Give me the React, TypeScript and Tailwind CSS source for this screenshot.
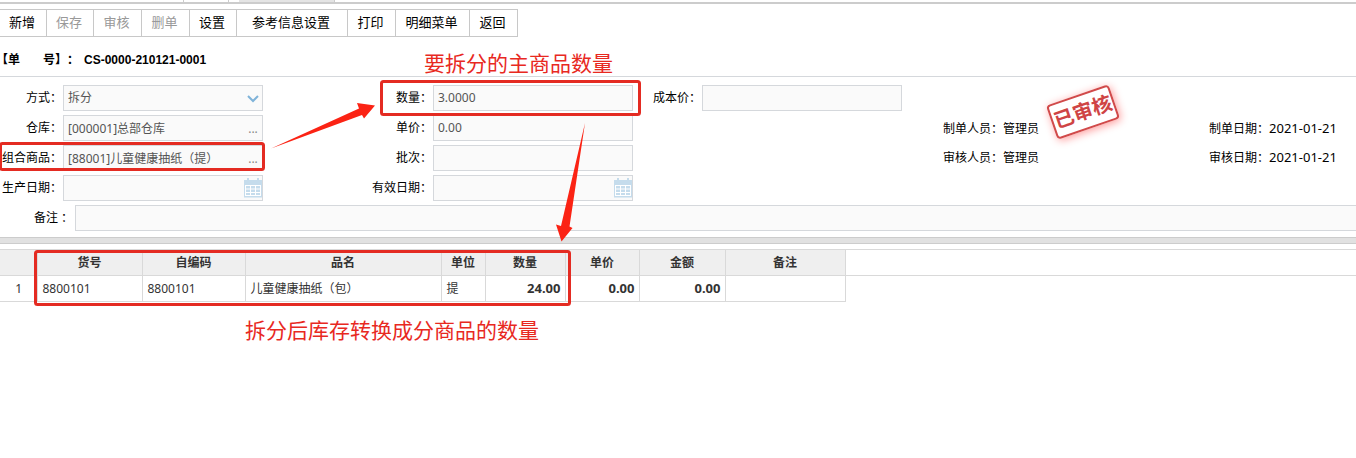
import type { ReactNode } from "react";

const toolbar = [
  { label: "新增", width: "w-[47px]" },
  { label: "保存", width: "w-[47px]", disabled: true },
  { label: "审核", width: "w-12", disabled: true },
  { label: "删单", width: "w-12", disabled: true },
  { label: "设置", width: "w-[47px]" },
  { label: "参考信息设置", width: "w-[111px]" },
  { label: "打印", width: "w-12" },
  { label: "明细菜单", width: "w-[74px]" },
  { label: "返回", width: "w-12" },
];

const columns = [
  { title: "", width: "w-[37px]" },
  { title: "货号", width: "w-[105px]" },
  { title: "自编码", width: "w-[103px]" },
  { title: "品名", width: "w-[196px]" },
  { title: "单位", width: "w-[44px]" },
  { title: "数量", width: "w-[80px]" },
  { title: "单价", width: "w-[74px]" },
  { title: "金额", width: "w-[86px]" },
  { title: "备注", width: "w-[120px]" },
];

const rows = [
  { code: "8800101", custom: "8800101", name: "儿童健康抽纸（包）", unit: "提", qty: "24.00", price: "0.00", amount: "0.00" },
];

const fieldClass =
  "block h-[26px] w-full rounded-none border border-[#d5d8dc] bg-[#fafafa] px-1 pb-px text-xs text-[#555] outline-none";

function CalendarIcon() {
  return (
    <svg className="h-5 w-5" viewBox="0 0 20 20" fill="none">
      <path d="M1 2h18v17.5H1z" fill="#c5dcec" />
      <path d="M4 0h2v3H4zM14 0h2v3h-2z" fill="#c5dcec" />
      <path d="M2 7h16v11H2z" fill="#fff" />
      <path d="M3 8h4v2.5H3zM8 8h4v2.5H8zM13 8h4v2.5h-4zM3 11.5h4V14H3zM8 11.5h4V14H8zM13 11.5h4V14h-4zM3 15h4v2H3zM8 15h4v2H8zM13 15h4v2h-4z" fill="#c5dcec" />
    </svg>
  );
}

function Field({ id, label, value = "", children }: { id: string; label: string; value?: string; children?: ReactNode }) {
  return (
    <>
      <label htmlFor={id} className="whitespace-nowrap pr-px text-right">
        {label}：
      </label>
      <div className="relative">
        <input id={id} type="text" readOnly value={value} className={fieldClass} />
        {children}
      </div>
    </>
  );
}

function PickButton({ label }: { label: string }) {
  return (
    <button type="button" aria-label={label} className="absolute right-1 top-1 h-5 w-3 text-xs text-[#888]">
      ...
    </button>
  );
}

function DateButton({ label }: { label: string }) {
  return (
    <button type="button" aria-label={label} className="absolute right-0 top-[3px]">
      <CalendarIcon />
    </button>
  );
}

function Meta({ label, value, className = "" }: { label: string; value: string; className?: string }) {
  return (
    <div className="flex h-[18px] items-center whitespace-nowrap">
      <dt>{label}：</dt>
      <dd className={className}>{value}</dd>
    </div>
  );
}

function Annotations() {
  return (
    <div className="pointer-events-none absolute inset-0 overflow-hidden text-[21px] leading-7 text-[#e8291f]">
      <svg className="absolute left-0 top-0 h-[320px] w-[680px]" viewBox="0 0 680 320" fill="none">
        <g stroke="#e42b22" strokeWidth="3">
          <rect x="0.5" y="143.5" width="263" height="26" rx="2" />
          <rect x="381.5" y="81.5" width="258" height="33" rx="2" />
          <rect x="35.5" y="251.5" width="534" height="53" rx="2" />
        </g>
        <g fill="#fb2314">
          <path d="M271 148.5 359 108.5 357 103 375 105.5 364 118.5 362 115z" />
          <path d="M585 123 569.5 226.5 572.5 228 561.5 241.5 556 224.5 561 226z" />
        </g>
      </svg>
      <p className="absolute left-[424px] top-[49px]">要拆分的主商品数量</p>
      <p className="absolute left-[245px] top-[316px]">拆分后库存转换成分商品的数量</p>
    </div>
  );
}

export default function App() {
  return (
    <main className="relative min-h-screen bg-white font-['Noto_Sans','Noto_Sans_CJK_SC',sans-serif] text-xs text-black">
      <div className="flex h-[4px] border-b-2 border-[#ccc]">
        <div className="w-[184px] border-r border-[#ccc]" />
        <div className="w-[45px] border-r border-[#ccc]" />
        <div className="ml-[10px] w-[96px] border-r border-[#ccc] bg-[#e4e4e4]" />
      </div>

      <div className="mt-[5px] flex" role="toolbar">
        {toolbar.map((item) => (
          <button
            key={item.label}
            type="button"
            disabled={item.disabled}
            className={`h-7 shrink-0 border-y border-r border-[#c8c8c8] pr-0.5 text-[13px] disabled:text-[#999] ${item.width}`}
          >
            {item.label}
          </button>
        ))}
      </div>

      <h1 className="flex h-10 items-center border-b border-[#d5d8dc] pt-[6px] pl-0.5 font-['Liberation_Sans','Noto_Sans_CJK_SC',sans-serif] font-bold">
        <span className="[text-spacing-trim:trim-start]">【单</span>
        <span className="ml-[23px] [text-spacing-trim:space-all]">号】：</span>
        <span className="ml-[5px]">CS-0000-210121-0001</span>
      </h1>

      <form className="pt-2">
        <div className="grid grid-cols-[63px_200px_170px_200px_69px_200px_1fr] items-center gap-y-1">
          <label htmlFor="mode" className="pr-px text-right">方式：</label>
          <div className="relative">
            <select id="mode" className={`${fieldClass} appearance-none`}>
              <option>拆分</option>
            </select>
            <svg className="pointer-events-none absolute right-1 top-2 h-3 w-3" viewBox="0 0 12 12" fill="none">
              <path d="M1 3l5 5 5-5" stroke="#7fb3d9" strokeWidth="2" />
            </svg>
          </div>
          <Field id="qty" label="数量" value="3.0000" />
          <Field id="cost" label="成本价" />
          <div />

          <Field id="warehouse" label="仓库" value="[000001]总部仓库">
            <PickButton label="选择仓库" />
          </Field>
          <Field id="price" label="单价" value="0.00" />
          <div className="col-span-2" />
          <dl className="col-start-7 row-span-2 row-start-2 grid grid-cols-[266px_1fr] gap-y-[11px] pl-[41px]">
            <Meta label="制单人员" value="管理员" />
            <Meta label="制单日期" value="2021-01-21" className="text-[13px]" />
            <Meta label="审核人员" value="管理员" />
            <Meta label="审核日期" value="2021-01-21" className="text-[13px]" />
          </dl>

          <Field id="goods" label="组合商品" value="[88001]儿童健康抽纸（提）">
            <PickButton label="选择组合商品" />
          </Field>
          <Field id="batch" label="批次" />
          <div className="col-span-2" />

          <Field id="made" label="生产日期">
            <DateButton label="选择生产日期" />
          </Field>
          <Field id="expiry" label="有效日期">
            <DateButton label="选择有效日期" />
          </Field>
        </div>
        <div className="mt-1 flex items-center">
          <label htmlFor="remark" className="w-[75px] pr-0.5 text-right">备注 ：</label>
          <input id="remark" type="text" readOnly className="h-[26px] flex-1 border border-r-0 border-[#d5d8dc] bg-[#fafafa] px-1" />
        </div>
      </form>

      <div className="mt-[6px] h-[7px] border-y border-[#ccc] bg-[#e1e1e1]" />

      <section className="relative mt-[5px]">
        <div className="absolute inset-x-0 top-0 h-[27px] border-y border-[#d9d9d9]" />
        <table className="relative w-[845px] table-fixed border-collapse text-[#333]">
          <thead>
            <tr className="h-[26px] bg-[#efefef]">
              {columns.map((col) => (
                <th key={col.title} className={`border border-l-0 border-[#d9d9d9] p-0 ${col.width}`}>
                  {col.title}
                </th>
              ))}
            </tr>
          </thead>
          <tbody>
            {rows.map((row, i) => (
              <tr key={row.code} className="h-[26px] *:border *:border-l-0 *:border-[#d9d9d9] *:py-0 *:pr-1 *:pl-[5px]">
                <td className="text-center">{i + 1}</td>
                <td>{row.code}</td>
                <td>{row.custom}</td>
                <td>{row.name}</td>
                <td>{row.unit}</td>
                <td className="text-right text-[13px] font-bold">{row.qty}</td>
                <td className="text-right text-[13px] font-bold">{row.price}</td>
                <td className="text-right text-[13px] font-bold">{row.amount}</td>
                <td />
              </tr>
            ))}
          </tbody>
        </table>
      </section>

      <div className="absolute left-[1050px] top-[94px] flex h-9 w-[66px] -rotate-[19deg] items-center justify-center rounded border-2 border-[#d14a4a] text-xl font-bold text-[#cf4444] shadow-[1px_2px_8px_#ff9c9c]">
        已审核
      </div>
      <Annotations />
    </main>
  );
}
